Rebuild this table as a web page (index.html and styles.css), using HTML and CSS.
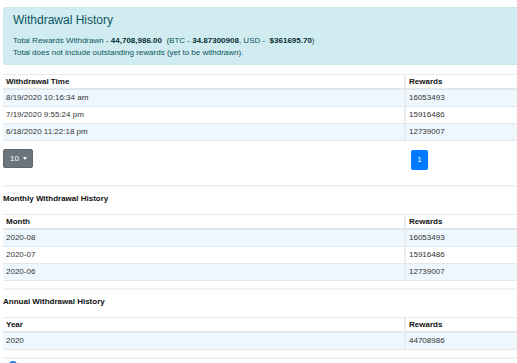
FILE: index.html
```html
<!DOCTYPE html>
<html lang="en">
<head>
    <meta charset="UTF-8">
    <title>Withdrawal History</title>
    <link rel="stylesheet" href="styles.css">
</head>
<body>
    <div class="page">
        <div class="alert">
            <h2>Withdrawal History</h2>
            <p>Total Rewards Withdrawn - <strong>44,708,986.00</strong>&nbsp; (BTC - <strong>34.87300908</strong>, USD - &nbsp;<strong>$361695.70</strong>)</p>
            <p>Total does not include outstanding rewards (yet to be withdrawn).</p>
        </div>

        <table class="history">
            <thead>
                <tr><th>Withdrawal Time</th><th>Rewards</th></tr>
            </thead>
            <tbody>
                <tr><td>8/19/2020 10:16:34 am</td><td>16053493</td></tr>
                <tr><td>7/19/2020 9:55:24 pm</td><td>15916486</td></tr>
                <tr><td>6/18/2020 11:22:18 pm</td><td>12739007</td></tr>
            </tbody>
        </table>

        <div class="table-footer">
            <button class="page-size">10 <span class="caret"></span></button>
            <div class="pager">
                <button class="page-btn">1</button>
            </div>
        </div>

        <hr>
        <h4>Monthly Withdrawal History</h4>
        <table class="history">
            <thead>
                <tr><th>Month</th><th>Rewards</th></tr>
            </thead>
            <tbody>
                <tr><td>2020-08</td><td>16053493</td></tr>
                <tr><td>2020-07</td><td>15916486</td></tr>
                <tr><td>2020-06</td><td>12739007</td></tr>
            </tbody>
        </table>

        <hr class="tight">
        <h4 class="close">Annual Withdrawal History</h4>
        <table class="history">
            <thead>
                <tr><th>Year</th><th>Rewards</th></tr>
            </thead>
            <tbody>
                <tr><td>2020</td><td>44708986</td></tr>
            </tbody>
        </table>

        <hr class="tight">
        <span class="dot"></span>
    </div>
</body>
</html>
```

FILE: styles.css
```css
body {
    font-family: 'Liberation Sans', Arial, sans-serif;
    margin: 0;
    padding: 0;
    color: #212529;
    background: #fff;
    overflow: hidden;
}
.page {
    width: 560px;
    padding: 7px 0 0 3px;
}
.alert {
    background-color: #d1ecf1;
    color: #0c5460;
    border: 1px solid #c8e7ed;
    border-radius: 3px;
    padding: 5px 9px 5px;
}
.alert h2 {
    font-size: 12px;
    font-weight: normal;
    margin: 0 0 7px 0;
    line-height: 15px;
}
.alert p {
    font-size: 8px;
    margin: 0;
    line-height: 12px;
}
.alert strong {
    color: #062c33;
}
.history {
    width: 100%;
    border-collapse: separate;
    border-spacing: 0;
    font-size: 8px;
    margin: 9px 0 7px 0;
    color: #333;
}
.history th,
.history td {
    text-align: left;
    padding: 2px 3px;
    line-height: 12px;
    border-bottom: 1px solid #e4e7ea;
}
.history th:last-child,
.history td:last-child {
    border-left: 2px solid #e9ecef;
}
.history th:first-child,
.history td:first-child {
    width: 395px;
}
.history thead th {
    border-top: 1px solid #e9ecef;
    border-bottom: 2px solid #e4e7ea;
    padding-bottom: 1px;
    line-height: 10px;
    color: #111;
}
.history tbody tr:nth-child(odd) {
    background-color: #eef7fd;
}
.table-footer {
    display: flex;
    align-items: center;
    width: 514px;
}
.page-size {
    background: #6c757d;
    color: #fff;
    border: 1px solid #5f676e;
    border-radius: 2px;
    font-family: inherit;
    font-size: 8px;
    height: 19px;
    width: 30px;
    padding: 0 0 0 6px;
    text-align: left;
}
.caret {
    display: inline-block;
    border-left: 2.5px solid transparent;
    border-right: 2.5px solid transparent;
    border-top: 3px solid #fff;
    vertical-align: 1px;
    margin-left: 2px;
}
.pager {
    margin-left: 378px;
}
.page-btn {
    background: #007bff;
    color: #fff;
    border: none;
    border-radius: 2px;
    font-family: inherit;
    font-size: 8px;
    width: 17px;
    height: 20px;
    padding: 0;
}
hr {
    border: none;
    border-top: 2px solid #f0f1f2;
    margin: 15px 0 0 0;
    width: 514px;
}
hr.tight {
    margin-top: 0;
}
h4 {
    font-size: 8px;
    font-weight: bold;
    margin: 6px 0 0 0;
    line-height: 12px;
    color: #111;
}
h4.close {
    margin-top: 6px;
}
.dot {
    display: block;
    width: 8px;
    height: 8px;
    border-radius: 50%;
    background: #2f7ee8;
    margin: 2px 0 0 6px;
}
```
